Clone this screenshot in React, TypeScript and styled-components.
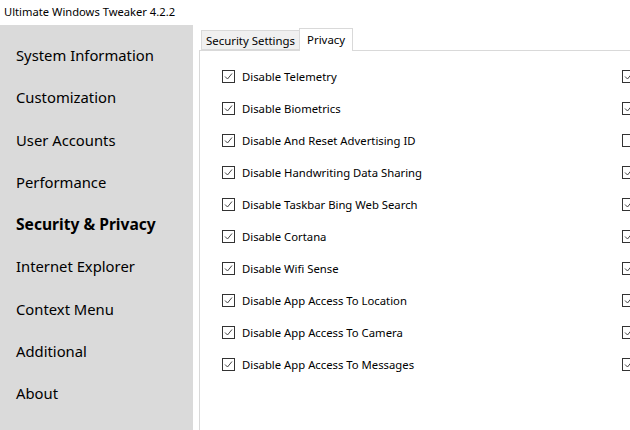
import React from 'react';
import styled, { createGlobalStyle } from 'styled-components';

const GlobalStyle = createGlobalStyle`
  html, body {
    margin: 0;
    padding: 0;
    background: #ffffff;
  }
  body {
    font-family: "Noto Sans", "Open Sans", sans-serif;
    color: #000000;
  }
`;

const Window = styled.div`
  width: 630px;
  height: 430px;
  display: flex;
  flex-direction: column;
  overflow: hidden;
  background: #ffffff;
`;

const TitleBar = styled.div`
  height: 25px;
  flex-shrink: 0;
  display: flex;
  align-items: center;
  padding-left: 4px;
  padding-bottom: 3px;
  box-sizing: border-box;
  font-size: 11.2px;
  color: #000000;
`;

const Body = styled.div`
  flex: 1;
  display: flex;
  min-height: 0;
`;

const Sidebar = styled.nav`
  width: 193px;
  flex-shrink: 0;
  background: #dadada;
  display: flex;
  flex-direction: column;
  padding-top: 9px;
  box-sizing: border-box;
`;

const NavItem = styled.div<{ $active?: boolean }>`
  height: 42.25px;
  flex-shrink: 0;
  display: flex;
  align-items: center;
  padding-left: 16px;
  font-size: ${({ $active }) => ($active ? '15.6px' : '14.8px')};
  font-weight: ${({ $active }) => ($active ? 700 : 400)};
  color: #000000;
  white-space: nowrap;
`;

const Main = styled.div`
  flex: 1;
  display: flex;
  flex-direction: column;
  padding-left: 6px;
  min-width: 0;
`;

const TabStrip = styled.div`
  height: 25px;
  display: flex;
  align-items: flex-end;
  padding-left: 2px;
  position: relative;
  z-index: 1;
`;

const Tab = styled.div<{ $selected?: boolean }>`
  height: ${({ $selected }) => ($selected ? '23px' : '20px')};
  box-sizing: border-box;
  display: flex;
  align-items: center;
  padding: ${({ $selected }) => ($selected ? '0 7px 2px' : '0 4px 0')};
  margin-bottom: ${({ $selected }) => ($selected ? '-1px' : '0')};
  font-size: 11.4px;
  background: ${({ $selected }) => ($selected ? '#ffffff' : '#f0f0f0')};
  border: 1px solid #d9d9d9;
  border-bottom: ${({ $selected }) => ($selected ? 'none' : '1px solid #d9d9d9')};
  margin-left: ${({ $selected }) => ($selected ? '-1px' : '0')};
  white-space: nowrap;
`;

const Panel = styled.div`
  flex: 1;
  border-top: 1px solid #d9d9d9;
  border-left: 1px solid #d9d9d9;
  padding: 9px 0 0 22px;
  display: grid;
  grid-template-columns: 400px 200px;
  grid-auto-rows: 32px;
  overflow: hidden;
`;

const Option = styled.label`
  display: flex;
  align-items: center;
  gap: 7px;
  font-size: 11.3px;
  white-space: nowrap;
`;

const Box = styled.span`
  width: 13px;
  height: 13px;
  box-sizing: border-box;
  border: 1px solid #333333;
  background: #ffffff;
  display: flex;
  align-items: center;
  justify-content: center;
  flex-shrink: 0;
`;

const Check = ({ checked }: { checked: boolean }) => (
  <Box>
    {checked && (
      <svg width="11" height="11" viewBox="0 0 11 11">
        <path d="M2 5.5 L4.5 8 L9 2.5" fill="none" stroke="#444444" strokeWidth="1" />
      </svg>
    )}
  </Box>
);

const navItems = [
  'System Information',
  'Customization',
  'User Accounts',
  'Performance',
  'Security & Privacy',
  'Internet Explorer',
  'Context Menu',
  'Additional',
  'About',
];

const options = [
  { label: 'Disable Telemetry', right: true },
  { label: 'Disable Biometrics', right: true },
  { label: 'Disable And Reset Advertising ID', right: false },
  { label: 'Disable Handwriting Data Sharing', right: true },
  { label: 'Disable Taskbar Bing Web Search', right: true },
  { label: 'Disable Cortana', right: true },
  { label: 'Disable Wifi Sense', right: true },
  { label: 'Disable App Access To Location', right: true },
  { label: 'Disable App Access To Camera', right: true },
  { label: 'Disable App Access To Messages', right: true },
];

export default function App() {
  return (
    <>
      <GlobalStyle />
      <Window>
        <TitleBar>Ultimate Windows Tweaker 4.2.2</TitleBar>
        <Body>
          <Sidebar>
            {navItems.map((item) => (
              <NavItem key={item} $active={item === 'Security & Privacy'}>
                {item}
              </NavItem>
            ))}
          </Sidebar>
          <Main>
            <TabStrip>
              <Tab>Security Settings</Tab>
              <Tab $selected>Privacy</Tab>
            </TabStrip>
            <Panel>
              {options.map((opt) => (
                <React.Fragment key={opt.label}>
                  <Option>
                    <Check checked />
                    {opt.label}
                  </Option>
                  <Option>
                    <Check checked={opt.right} />
                  </Option>
                </React.Fragment>
              ))}
            </Panel>
          </Main>
        </Body>
      </Window>
    </>
  );
}
